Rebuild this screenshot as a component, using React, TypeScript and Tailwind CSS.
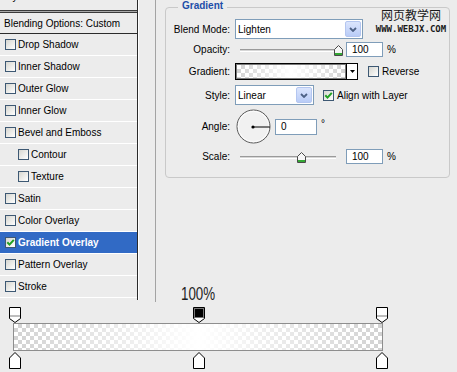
import clsx from 'clsx';
import type { ReactNode } from 'react';

const effects = [
  { label: 'Drop Shadow' },
  { label: 'Inner Shadow' },
  { label: 'Outer Glow' },
  { label: 'Inner Glow' },
  { label: 'Bevel and Emboss' },
  { label: 'Contour', sub: true },
  { label: 'Texture', sub: true },
  { label: 'Satin' },
  { label: 'Color Overlay' },
  { label: 'Gradient Overlay', checked: true, active: true },
  { label: 'Pattern Overlay' },
  { label: 'Stroke' },
];

const opacityStops = [{ loc: 0 }, { loc: 50, selected: true }, { loc: 100 }];
const colorStops = [{ loc: 0 }, { loc: 50 }, { loc: 100 }];

const stopLeft = (loc: number) => ({ left: 9 + Math.round(loc * 3.67) });

const Checkbox = ({ checked = false }: { checked?: boolean }) => (
  <span className="flex h-[11px] w-[11px] shrink-0 items-center justify-center border border-[#3d5873] bg-[linear-gradient(135deg,#d6d6d0,#ffffff)]">
    {checked && (
      <svg width="9" height="9" viewBox="0 0 9 9">
        <path d="M1.3 4.3 3.5 6.6 7.8 1.8" fill="none" stroke="#21a121" strokeWidth="2" />
      </svg>
    )}
  </span>
);

const DropButton = () => (
  <span className="mr-[1px] ml-auto flex h-[16px] w-[16px] items-center justify-center rounded-[2px] border border-[#b4c6f0] bg-[linear-gradient(#dbe5fd,#b9ccf7)]">
    <svg width="8" height="5" viewBox="0 0 8 5">
      <path d="M1 1 4 4 7 1" fill="none" stroke="#4d6185" strokeWidth="1.8" />
    </svg>
  </span>
);

const Select = ({ value, className }: { value: string; className: string }) => (
  <div className={clsx('flex h-[20px] items-center border border-[#7f9db9] bg-white pl-[2px]', className)}>
    <span>{value}</span>
    <DropButton />
  </div>
);

const Input = ({ value, className }: { value: string; className: string }) => (
  <div className={clsx('flex items-center border border-[#7f9db9] bg-white pl-[5px]', className)}>{value}</div>
);

const Thumb = () => (
  <svg width="9" height="11" viewBox="0 0 9 11">
    <path d="M4.5.5 8.5 4.5V10.5H.5V4.5Z" fill="#f6f6f6" stroke="#4a4a4a" />
    <rect x="1" y="8" width="7" height="2" fill="#34a834" />
  </svg>
);

const Slider = ({ track, thumb }: { track: string; thumb: string }) => (
  <div className="relative h-full w-[107px]">
    <div className={clsx('absolute left-[5px] top-[7px] h-[3px] border-t border-b border-t-[#9a9a9a] border-b-white bg-[#d6d6d6]', track)} />
    <div className={clsx('absolute top-[3px] flex', thumb)}>
      <Thumb />
    </div>
  </div>
);

const Row = ({ label, className, children }: { label: string; className: string; children: ReactNode }) => (
  <div className={clsx('flex items-center', className)}>
    <span className="w-[64px] shrink-0 text-right">{label}</span>
    <div className="ml-[5px] flex h-full items-center">{children}</div>
  </div>
);

const checker =
  'bg-[conic-gradient(#d2d2d2_25%,#ffffff_0_50%,#d2d2d2_0_75%,#ffffff_0)] bg-size-[8px_8px]';
const fade = 'bg-[linear-gradient(to_right,rgba(255,255,255,0),#ffffff_50%,rgba(255,255,255,0))]';

const OpacityStop = ({ selected }: { selected?: boolean }) => (
  <svg width="12" height="16" viewBox="0 0 12 16">
    <path d="M.5.5h11v11L6 15.5.5 11.5Z" fill="#fff" stroke="#000" />
    {selected ? (
      <rect x="1.5" y="1.5" width="9" height="9" fill="#000" stroke="#777" />
    ) : (
      <rect x="1" y="8" width="10" height="2" fill="#bdbdbd" />
    )}
  </svg>
);

const ColorStop = () => (
  <svg width="12" height="17" viewBox="0 0 12 17">
    <path d="M6 .5 11.5 6v10.5H.5V6Z" fill="#fff" stroke="#000" />
  </svg>
);

export default function App() {
  return (
    <div className="relative h-[372px] w-[457px] overflow-hidden bg-[#ececec] font-['Liberation_Sans',Arial,sans-serif] text-[10px] text-black">
      <div className="flex h-[302px]">
        {/* styles list, scrolled so the first row is mostly hidden */}
        <div className="h-[300px] w-[138px] shrink-0 border-r border-[#2b2b2b]">
          <div className="h-[10px] overflow-hidden">
            <div className="-mt-[15px] flex h-[22px] items-center pl-[3px]">Styles</div>
          </div>
          <div className="h-[3px] border-y border-[#3a3a3a] bg-[#a9a9a9]" />
          <div className="flex h-[21px] items-center border-b border-[#2b2b2b] pl-[4px]">Blending Options: Custom</div>
          {effects.map((fx) => (
            <div
              key={fx.label}
              className={clsx(
                'flex h-[22px] items-center border-b border-white',
                fx.sub ? 'pl-[18px]' : 'pl-[5px]',
                fx.active && 'bg-[#316ac5] font-bold text-white'
              )}
            >
              <Checkbox checked={fx.checked} />
              <span className="ml-[2px]">{fx.label}</span>
            </div>
          ))}
        </div>
        <div className="h-[300px] w-[1px] bg-white" />
        <div className="w-[16px]" />

        {/* gradient options */}
        <div className="flex h-full flex-1 flex-col border-l border-[#a3a3a3]">
          <div className="mt-[7px] ml-[9px] w-[285px] rounded-[4px] border border-[#c9c9c9] pb-[13px]">
            <div className="-mt-[8px] ml-[12px] w-fit bg-[#ececec] px-[4px] font-bold leading-[12px] text-[#1d4ea8]">
              Gradient
            </div>
            <Row label="Blend Mode:" className="mt-[7px] h-[20px]">
              <Select value="Lighten" className="w-[128px]" />
            </Row>
            <Row label="Opacity:" className="mt-[3px] h-[15px]">
              <Slider track="w-[100px]" thumb="left-[99px]" />
              <Input value="100" className="ml-[4px] h-[15px] w-[37px]" />
              <span className="ml-[4px]">%</span>
            </Row>
            <Row label="Gradient:" className="mt-[6px] h-[17px]">
              <div className="flex h-[17px] w-[123px] border border-black bg-white">
                <div className={clsx('h-full flex-1 border border-[#7a7a7a]', checker)}>
                  <div className={clsx('h-full w-full', fade)} />
                </div>
                <div className="flex w-[11px] items-center justify-center border-l border-black">
                  <svg width="5" height="3" viewBox="0 0 5 3">
                    <path d="M0 0h5L2.5 3Z" fill="#000" />
                  </svg>
                </div>
              </div>
              <span className="ml-[10px] flex">
                <Checkbox />
              </span>
              <span className="ml-[3px]">Reverse</span>
            </Row>
            <Row label="Style:" className="mt-[5px] h-[20px]">
              <Select value="Linear" className="w-[79px]" />
              <span className="ml-[9px] flex">
                <Checkbox checked />
              </span>
              <span className="ml-[3px]">Align with Layer</span>
            </Row>
            <Row label="Angle:" className="mt-[4px] h-[35px]">
              <svg width="35" height="35" viewBox="0 0 35 35" className="ml-[1px]">
                <circle cx="17.5" cy="17.5" r="16.5" fill="#f1f1f1" stroke="#585858" />
                <circle cx="17.5" cy="17.5" r="15.3" fill="none" stroke="#ffffff" strokeOpacity="0.8" />
                <line x1="17.5" y1="18" x2="34" y2="18" stroke="#000" />
                <circle cx="17" cy="18" r="1.6" fill="#000" />
              </svg>
              <Input value="0" className="ml-[4px] h-[16px] w-[42px]" />
              <span className="ml-[4px] self-start mt-[10px] leading-[10px]">°</span>
            </Row>
            <Row label="Scale:" className="mt-[5px] h-[15px]">
              <Slider track="w-[96px]" thumb="left-[62px]" />
              <Input value="100" className="ml-[4px] h-[15px] w-[37px]" />
              <span className="ml-[4px]">%</span>
            </Row>
          </div>
          <div className="mt-auto h-[16px] pl-[25px] leading-[16px] text-[#1e1e1e]">
            <span className="inline-block origin-left scale-x-[0.74] text-[18px]">100%</span>
          </div>
        </div>
      </div>

      {/* gradient editor bar */}
      <div className="h-[70px] pt-[5px]">
        <div className="relative h-[16px]">
          {opacityStops.map((s) => (
            <span key={s.loc} className="absolute top-0 flex" style={stopLeft(s.loc)}>
              <OpacityStop selected={s.selected} />
            </span>
          ))}
        </div>
        <div className={clsx('ml-[13px] h-[28px] w-[370px] border border-[#8e8e8e]', checker)}>
          <div className={clsx('h-full w-full', fade)} />
        </div>
        <div className="relative mt-[1px] h-[17px]">
          {colorStops.map((s) => (
            <span key={s.loc} className="absolute top-0 flex" style={stopLeft(s.loc)}>
              <ColorStop />
            </span>
          ))}
        </div>
      </div>

      {/* watermark */}
      <div className="absolute top-[8px] left-[375px] flex w-[72px] flex-col items-center">
        <span className="font-['Noto_Sans_CJK_SC',sans-serif] text-[12px] leading-[14px] text-[#1a1a1a]">网页教学网</span>
        <span className="mt-[3px] font-['DejaVu_Sans_Mono',monospace] text-[9px] leading-[9px] font-bold text-[#1a1a1a]">
          WWW.WEBJX.COM
        </span>
      </div>
    </div>
  );
}
